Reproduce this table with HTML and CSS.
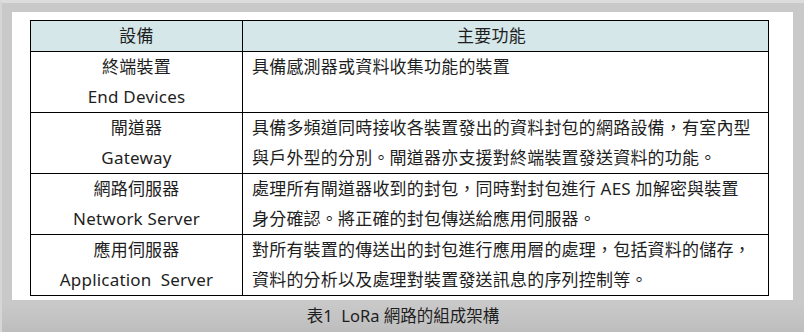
FILE: index.html
```html
<!DOCTYPE html>
<html lang="zh-Hant">
<head>
<meta charset="utf-8">
<link rel="stylesheet" href="styles.css">
</head>
<body>
<div class="frame">
  <div class="panel">
    <table class="grid">
      <colgroup><col class="c1"><col class="c2"></colgroup>
      <thead>
        <tr><th>設備</th><th class="h2">主要功能</th></tr>
      </thead>
      <tbody>
        <tr><td class="dev">終端裝置<br>End Devices</td><td class="desc">具備感測器或資料收集功能的裝置</td></tr>
        <tr><td class="dev">閘道器<br>Gateway</td><td class="desc">具備多頻道同時接收各裝置發出的資料封包的網路設備，有室內型<br>與戶外型的分別。閘道器亦支援對終端裝置發送資料的功能。</td></tr>
        <tr><td class="dev">網路伺服器<br>Network Server</td><td class="desc">處理所有閘道器收到的封包，同時對封包進行 AES 加解密與裝置<br>身分確認。將正確的封包傳送給應用伺服器。</td></tr>
        <tr><td class="dev">應用伺服器<br>Application&nbsp; Server</td><td class="desc">對所有裝置的傳送出的封包進行應用層的處理，包括資料的儲存，<br>資料的分析以及處理對裝置發送訊息的序列控制等。</td></tr>
      </tbody>
    </table>
  </div>
  <div class="caption">表1&nbsp; LoRa 網路的組成架構</div>
</div>
</body>
</html>
```
FILE: styles.css
```css
html, body {
  margin: 0;
  padding: 0;
}
body {
  width: 804px;
  height: 332px;
  overflow: hidden;
  background: #c8c8c8;
  font-family: "Noto Sans", "Noto Sans CJK TC", sans-serif;
  color: #1e1e1e;
}
.frame {
  width: 804px;
  height: 332px;
  box-sizing: border-box;
  border-top: 3px solid #dcdcdc;
  border-left: 2px solid #d6d6d6;
  padding: 9px 11px 0 10px;
  background: linear-gradient(to bottom, #c9c9c9 0, #c9c9c9 300px, #c3c3c3 316px, #bcbcbc 332px);
}
.panel {
  background: #ffffff;
  height: 288px;
  box-sizing: border-box;
  padding: 8px 24px 5px 18px;
}
.grid {
  border-collapse: collapse;
  table-layout: fixed;
  width: 739px;
  font-size: 17px;
  letter-spacing: 0.2px;
}
.c1 { width: 212px; }
.grid th, .grid td {
  border: 1px solid #000;
  padding: 0;
  line-height: 30px;
  font-weight: normal;
  vertical-align: top;
}
.grid th {
  background: #d5e7e9;
  height: 30px;
  text-align: center;
}
.grid th.h2 {
  padding-right: 28px;
}
.grid td {
  height: 60px;
}
.dev {
  text-align: center;
}
.desc {
  text-align: left;
  padding-left: 9px !important;
  white-space: nowrap;
}
.caption {
  height: 32px;
  line-height: 32px;
  text-align: center;
  font-size: 16.5px;
  margin-left: -10px;
  margin-right: -11px;
}
```
